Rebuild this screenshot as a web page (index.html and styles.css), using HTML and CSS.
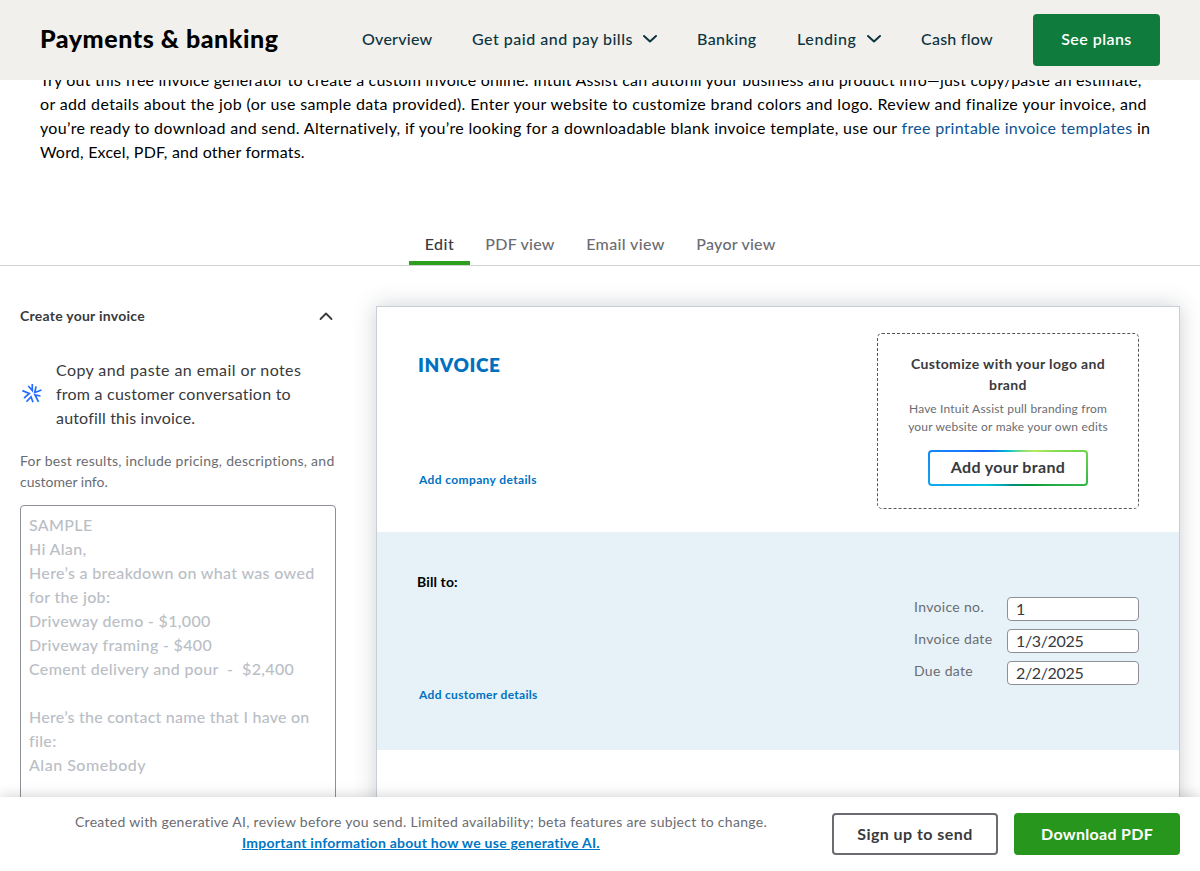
FILE: index.html
```html
<!DOCTYPE html>
<html lang="en">
<head>
<meta charset="utf-8">
<title>Payments &amp; banking</title>
<link rel="stylesheet" href="styles.css">
</head>
<body>
<header class="topbar">
  <div class="brand">Payments &amp; banking</div>
  <nav class="nav">
    <a class="nav-overview">Overview</a>
    <a class="nav-pay"><span>Get paid and pay bills</span><svg class="chev" width="16" height="10" viewBox="0 0 16 10"><path d="M2 2l6 5.500L14 2"/></svg></a>
    <a class="nav-banking">Banking</a>
    <a class="nav-lending"><span>Lending</span><svg class="chev" width="16" height="10" viewBox="0 0 16 10"><path d="M2 2l6 5.500L14 2"/></svg></a>
    <a class="nav-cash">Cash flow</a>
  </nav>
  <a class="plans">See plans</a>
</header>
<main class="main">
  <p class="intro">
    <span class="l1">Try out this free invoice generator to create a custom invoice online. Intuit Assist can autofill your business and product info—just copy/paste an estimate,</span>
    <span class="l2">or add details about the job (or use sample data provided). Enter your website to customize brand colors and logo. Review and finalize your invoice, and</span>
    <span class="l3">you’re ready to download and send. Alternatively, if you’re looking for a downloadable blank invoice template, use our <a>free printable invoice templates</a> in</span>
    <span class="l4">Word, Excel, PDF, and other formats.</span>
  </p>
  <div class="tabs">
    <a class="tab tab-edit active">Edit</a>
    <a class="tab tab-pdf">PDF view</a>
    <a class="tab tab-email">Email view</a>
    <a class="tab tab-payor">Payor view</a>
  </div>
  <div class="workspace">
    <aside class="side">
      <div class="side-head"><span>Create your invoice</span><svg width="14" height="9" viewBox="0 0 14 9"><path d="M1.500 7L7 1.500l5.500 5.500"/></svg></div>
      <div class="assist">
        <svg class="spark" width="20" height="20" viewBox="0 0 20 20"><path d="M6.300 2L10.300 6.500V0M14 2.300L12.800 8.500L19.500 6M18.500 12L13 11L16.500 17.800M11 18.300L9 12.800L4.500 17.800M2 14.200L7.300 9.500L.4 6.600"/></svg>
        <p><span class="a1">Copy and paste an email or notes</span><span class="a2">from a customer conversation to</span><span class="a3">autofill this invoice.</span></p>
      </div>
      <p class="hint"><span class="h1">For best results, include pricing, descriptions, and</span><span class="h2">customer info.</span></p>
      <div class="sample">SAMPLE
Hi Alan,
Here’s a breakdown on what was owed
for the job:
Driveway demo - $1,000
Driveway framing - $400
Cement delivery and pour  -  $2,400

<span class="s1">Here’s the contact name that I have on</span>
file:
<span class="s2">Alan Somebody</span></div>
    </aside>
    <section class="paper">
      <div class="paper-top">
        <div class="company">
          <h1>INVOICE</h1>
          <a class="add add-company">Add company details</a>
        </div>
        <div class="drop">
          <h2><span>Customize with your logo and</span><span>brand</span></h2>
          <p><span class="d1">Have Intuit Assist pull branding from</span><span class="d2">your website or make your own edits</span></p>
          <button class="brand-btn">Add your brand</button>
        </div>
      </div>
      <div class="billing">
        <div class="customer">
          <h3>Bill to:</h3>
          <a class="add add-customer">Add customer details</a>
        </div>
        <div class="fields">
          <label class="f-no"><span>Invoice no.</span><b>1</b></label>
          <label class="f-date"><span>Invoice date</span><b>1/3/2025</b></label>
          <label class="f-due"><span>Due date</span><b>2/2/2025</b></label>
        </div>
      </div>
    </section>
  </div>
</main>
<footer class="foot">
  <div class="legal">
    <div class="g1">Created with generative AI, review before you send. Limited availability; beta features are subject to change.</div>
    <a class="g2">Important information about how we use generative AI.</a>
  </div>
  <a class="btn signup">Sign up to send</a>
  <a class="btn download">Download PDF</a>
</footer>
</body>
</html>
```
FILE: styles.css
```css
* { box-sizing: border-box; }
body {
  margin: 0; height: 871px; overflow: hidden; background: #fff;
  display: flex; flex-direction: column;
  font-family: Lato, "Open Sans", sans-serif; font-size: 16px; line-height: 24px; color: #393a3d;
}
p, h1, h2, h3 { margin: 0; }
span, a, b, h1, h3, .g1 { white-space: nowrap; }
.topbar { height: 80px; flex: none; background: #f1f0ec; display: flex; align-items: center; padding: 0 40px; }
.brand { width: 322px; padding-bottom: 4px; font-weight: 900; font-size: 25px; line-height: 36px; letter-spacing: .53px; color: #000; white-space: nowrap; }
.nav { flex: 1; display: flex; color: #0d333f; font-weight: 500; padding-bottom: 2px; }
.nav a { display: flex; align-items: center; margin-right: 40px; }
.nav-overview { width: 70px; letter-spacing: .25px; }
.nav-pay { width: 186px; justify-content: space-between; letter-spacing: .5px; }
.nav .nav-pay, .nav .nav-lending { margin-right: 39px; }
.nav-banking { width: 60px; letter-spacing: .43px; }
.nav-lending { width: 85px; justify-content: space-between; letter-spacing: .6px; }
.nav-cash { width: 72px; letter-spacing: .25px; }
.chev { fill: none; stroke: #0d333f; stroke-width: 2; stroke-linecap: round; stroke-linejoin: round; }
.plans { width: 127px; height: 52px; border-radius: 4px; background: #0f7b3c; color: #fff; font-weight: 600; line-height: 50px; letter-spacing: .45px; text-align: center; }
.main { height: 717px; flex: none; overflow: hidden; }
.intro { margin-top: -12px; padding-left: 40px; height: 156px; color: #000; }
.intro span { display: block; }
.l1 { letter-spacing: .2px; }
.l2 { letter-spacing: .355px; }
.l3 { letter-spacing: .31px; }
.l4 { letter-spacing: .2px; }
.intro a { color: #0b5394; }
.tabs { height: 42px; border-bottom: 1px solid #d0d1d4; display: flex; justify-content: center; color: #6b6c72; font-weight: 500; }
.tab { line-height: 40px; text-align: center; }
.tab-edit { width: 61px; letter-spacing: .5px; }
.tab-pdf { width: 100px; letter-spacing: .25px; }
.tab-email { width: 111px; letter-spacing: .38px; }
.tab-payor { width: 110px; letter-spacing: .25px; }
.active { color: #393a3d; border-bottom: 4px solid #2ca01c; border-radius: 2px 2px 0 0; }
.workspace { display: flex; align-items: flex-start; gap: 40px; padding: 40px 20px 0; }
.side { width: 316px; }
.side-head { display: flex; justify-content: space-between; align-items: center; height: 20px; padding-right: 3px; font-size: 14px; font-weight: 700; letter-spacing: .26px; }
.side-head svg { fill: none; stroke: #393a3d; stroke-width: 1.8; stroke-linecap: round; stroke-linejoin: round; }
.assist { display: flex; align-items: center; gap: 14px; margin-top: 32px; padding-left: 2px; }
.assist span, .hint span { display: block; }
.a1 { letter-spacing: .41px; }
.a2 { letter-spacing: .23px; }
.a3 { letter-spacing: .18px; }
.spark { fill: none; stroke: #236cff; stroke-width: 1.7; overflow: visible; }
.hint { margin-top: 20px; font-size: 14px; line-height: 21px; color: #6b6c72; }
.h1 { letter-spacing: .27px; }
.sample { margin-top: 13px; height: 330px; border: 1px solid #8d9096; border-radius: 4px; padding: 7px 8px; white-space: pre; color: #babec5; font-weight: 500; letter-spacing: .33px; }
.s1 { letter-spacing: .24px; }
.s2 { letter-spacing: .5px; }
.paper { width: 804px; height: 560px; border: 1px solid #c9ced6; background: #fff; box-shadow: 0 0 20px rgba(57,66,80,.25); }
.paper-top { height: 225px; display: flex; justify-content: space-between; padding: 26px 40px 0; }
.company { display: flex; flex-direction: column; }
h1 { margin-top: 19px; padding-left: 1px; font-size: 19px; line-height: 26px; font-weight: 800; letter-spacing: .6px; color: #0071c1; }
.add { font-size: 12px; line-height: 18px; font-weight: 700; color: #0071c1; padding-left: 2px; }
.add-company { margin-top: 93px; letter-spacing: .37px; }
.drop { width: 262px; height: 176px; border: 1px dashed #55565b; border-radius: 5px; padding-top: 19px; display: flex; flex-direction: column; align-items: center; text-align: center; }
.drop span { display: block; }
h2 { font-size: 14px; line-height: 21px; font-weight: 700; letter-spacing: .36px; }
.drop p { margin-top: 5px; font-size: 12px; line-height: 18px; color: #6b6c72; letter-spacing: .18px; }
.brand-btn {
  width: 160px; height: 36px; margin-top: 14px; padding: 0 0 2px; border: 2px solid transparent; border-radius: 4px;
  background: linear-gradient(#fff, #fff) padding-box, conic-gradient(from 0deg at 50% 50%, #00c1cf 0deg, #b8e95c 58deg, #72d64d 77deg, #2fb44a 104deg, #089b3a 124deg, #008c87 168deg, #00c6dc 235deg, #13a5ee 258deg, #1685f8 283deg, #1761ff 303deg, #00c1cf 360deg) border-box;
  font: 700 16px/30px Lato, sans-serif; letter-spacing: .35px; color: #393a3d;
}
.billing { height: 218px; background: #e6f2f8; display: flex; justify-content: space-between; padding: 40px 40px 0; }
.customer { display: flex; flex-direction: column; }
h3 { font-size: 14px; line-height: 20px; font-weight: 700; letter-spacing: .12px; color: #000; }
.add-customer { margin-top: 94px; letter-spacing: .31px; }
.fields { display: flex; flex-direction: column; gap: 8px; padding-top: 25px; }
.fields label { width: 225px; height: 24px; display: flex; justify-content: space-between; }
.fields span { font-size: 14px; line-height: 19px; letter-spacing: .33px; color: #6b6c72; }
.fields b { width: 132px; height: 24px; border: 1px solid #8d9096; border-radius: 4px; background: #fff; padding-left: 8px; font-weight: 400; line-height: 22px; letter-spacing: -.35px; color: #393a3d; }
.foot { position: relative; height: 74px; flex: none; background: #fff; box-shadow: 0 0 14px rgba(0,0,0,.2); display: flex; align-items: flex-start; padding: 16px 20px 0; }
.legal { width: 802px; margin-right: 10px; display: flex; flex-direction: column; align-items: center; font-size: 14px; line-height: 21px; color: #6b6c72; margin-top: -2px; }
.g1 { letter-spacing: .295px; }
.g2 { letter-spacing: .26px; }
.legal a { color: #0077c5; font-weight: 700; text-decoration: underline; }
.btn { flex: none; width: 166px; height: 42px; border-radius: 4px; text-align: center; font-weight: 700; line-height: 42px; }
.signup { border: 2px solid #6b6c72; line-height: 38px; letter-spacing: .45px; color: #393a3d; margin-right: 16px; }
.download { background: #27961c; letter-spacing: .3px; color: #fff; }
```
